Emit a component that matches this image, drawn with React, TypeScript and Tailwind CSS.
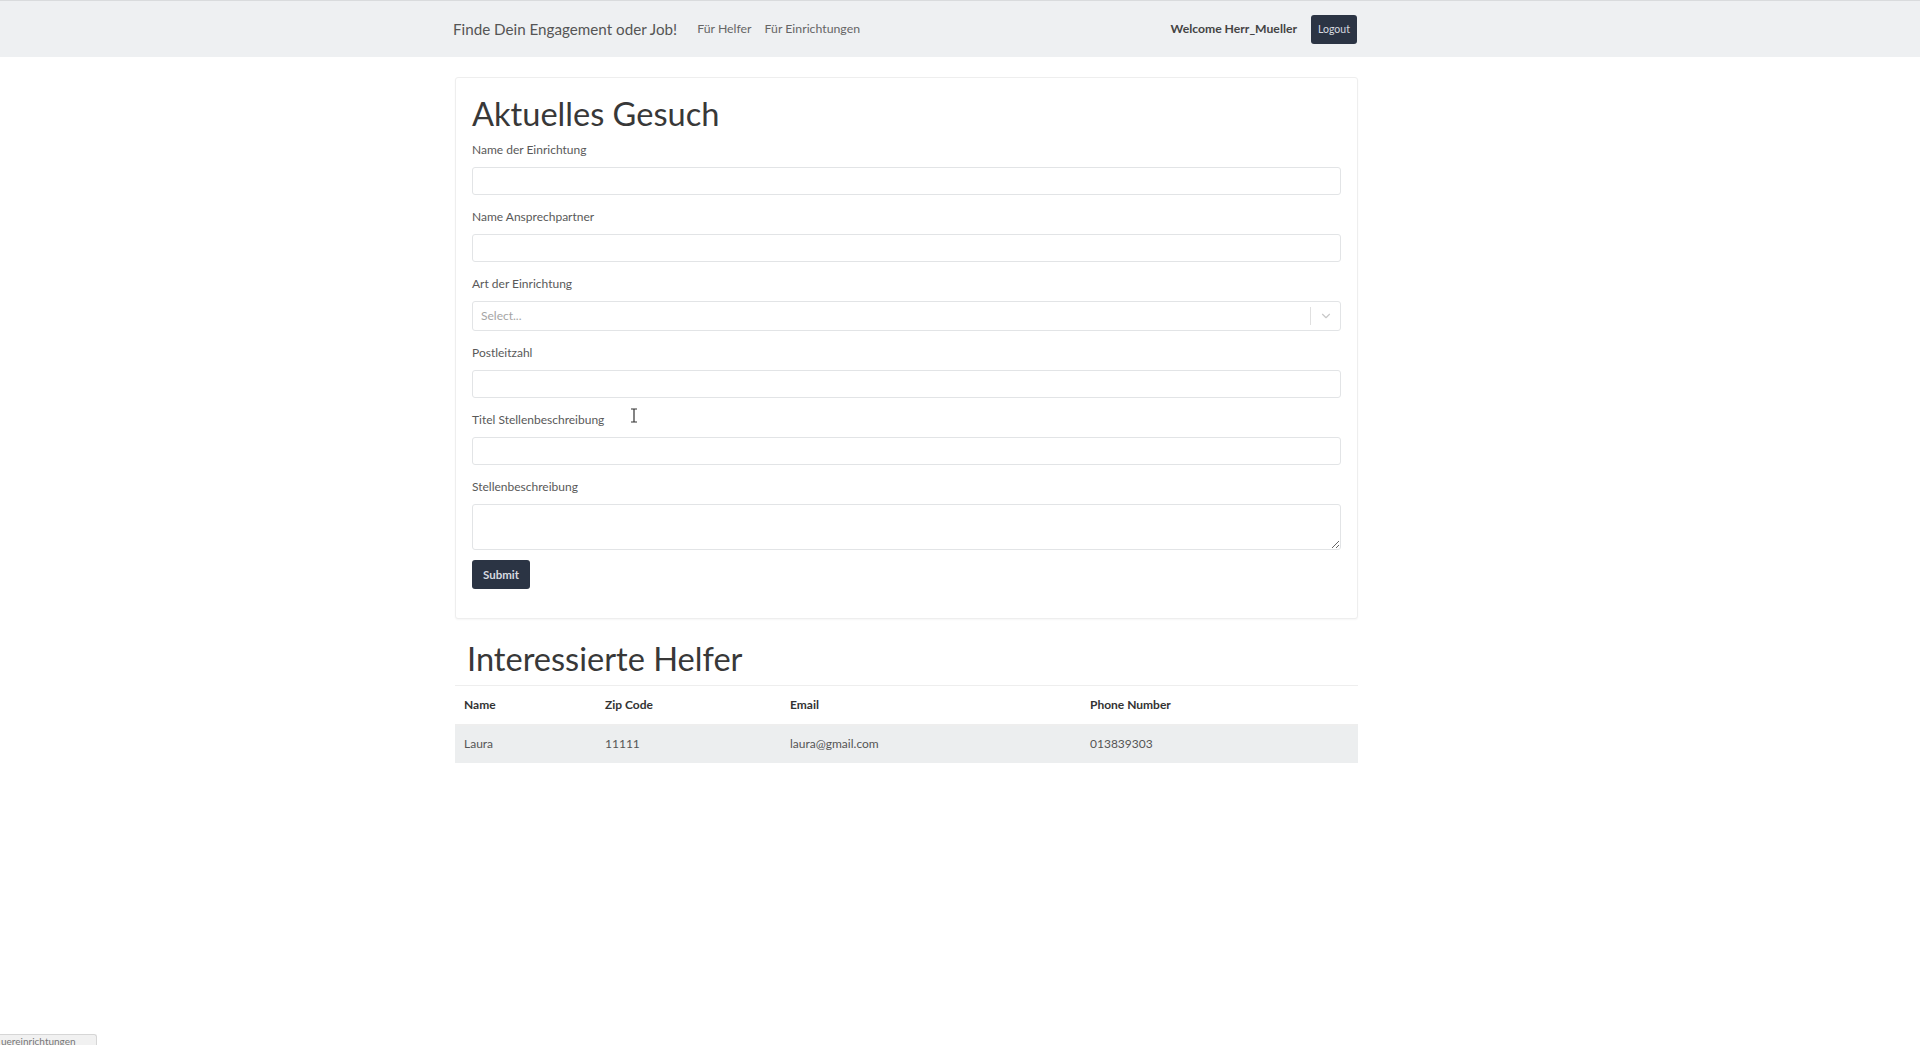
import { ChevronDown } from 'lucide-react';

const fields = [
  { label: 'Name der Einrichtung', kind: 'input' },
  { label: 'Name Ansprechpartner', kind: 'input' },
  { label: 'Art der Einrichtung', kind: 'select' },
  { label: 'Postleitzahl', kind: 'input' },
  { label: 'Titel Stellenbeschreibung', kind: 'input' },
  { label: 'Stellenbeschreibung', kind: 'textarea' },
];

const helpers = [{ name: 'Laura', zip: '11111', email: 'laura@gmail.com', phone: '013839303' }];

function Field({ label, kind }: { label: string; kind: string }) {
  return (
    <div className={kind === 'textarea' ? 'mb-[10px]' : 'mb-[13px]'}>
      <label className="block text-[12px] leading-[18px] text-[#595959] mb-2">{label}</label>
      {kind === 'input' && (
        <input className="block w-full h-[28px] rounded-[3px] border border-[#e2e4e6] bg-white px-2 text-[12px] outline-none" />
      )}
      {kind === 'select' && (
        <div className="flex h-[30px] w-full items-center rounded-[3px] border border-[#e2e4e6] bg-white">
          <span className="flex-1 pl-2 text-[12px] text-[#a5a5a5]">Select...</span>
          <span className="h-[18px] w-px bg-[#e0e0e0]" />
          <span className="flex w-[29px] justify-center text-[#c8c8c8]">
            <ChevronDown size={14} strokeWidth={2} />
          </span>
        </div>
      )}
      {kind === 'textarea' && (
        <textarea
          rows={2}
          className="block w-full h-[46px] rounded-[3px] border border-[#e2e4e6] bg-white px-2 text-[12px] outline-none"
        />
      )}
    </div>
  );
}

export default function App() {
  return (
    <div className="relative min-h-[1045px] bg-white font-['Lato',sans-serif] text-[#333]">
      <nav className="h-[57px] border-t border-[#d9dbdd] bg-[#eef0f2]">
        <div className="ml-[453px] flex h-full w-[904px] items-center pt-[1px]">
          <span className="text-[15.2px] text-[#555]">Finde Dein Engagement oder Job!</span>
          <a className="ml-[20px] text-[12.3px] text-[#666]">Für Helfer</a>
          <a className="ml-[13px] text-[12.3px] text-[#666]">Für Einrichtungen</a>
          <span className="ml-auto text-[12.2px] font-bold text-[#444]">Welcome Herr_Mueller</span>
          <button className="ml-[14px] h-[29px] w-[46px] rounded-[3px] bg-[#2b3444] text-[10.5px] text-[#d8dbe0]">
            Logout
          </button>
        </div>
      </nav>

      <main className="ml-[455px] w-[903px] pt-[20px]">
        <section className="rounded-[3px] border border-[#eeeeee] bg-white px-[16px] pt-[16px] pb-[29px] shadow-[0_1px_2px_rgba(0,0,0,0.04)]">
          <h1 className="text-[32.6px] leading-[1.2] text-[#383838] mb-[8px]">Aktuelles Gesuch</h1>
          {fields.map((f) => (
            <Field key={f.label} label={f.label} kind={f.kind} />
          ))}
          <button className="h-[29px] w-[58px] rounded-[3px] bg-[#2b3444] text-[11.5px] font-bold text-[#d8dbe0]">
            Submit
          </button>
        </section>

        <h1 className="mt-[20px] mb-[7px] pl-[12px] text-[32.6px] leading-[1.2] text-[#383838]">Interessierte Helfer</h1>
        <table className="w-full table-fixed border-collapse text-left text-[12px]">
          <thead>
            <tr className="h-[39px] border-t border-b-2 border-t-[#eeeeee] border-b-[#eeeeee]">
              <th className="w-[141px] pl-[9px] font-bold text-[#333]">Name</th>
              <th className="w-[185px] pl-[9px] font-bold text-[#333]">Zip Code</th>
              <th className="w-[300px] pl-[9px] font-bold text-[#333]">Email</th>
              <th className="pl-[9px] font-bold text-[#333]">Phone Number</th>
            </tr>
          </thead>
          <tbody>
            {helpers.map((h) => (
              <tr key={h.email} className="h-[38px] bg-[#eceeef] text-[#555]">
                <td className="pl-[9px]">{h.name}</td>
                <td className="pl-[9px]">{h.zip}</td>
                <td className="pl-[9px]">{h.email}</td>
                <td className="pl-[9px]">{h.phone}</td>
              </tr>
            ))}
          </tbody>
        </table>
      </main>

      <svg className="absolute left-[630px] top-[408px]" width="8" height="15" viewBox="0 0 8 15">
        <path d="M1 1h6M4 1v13M1 14h6" stroke="#333" strokeWidth="1.2" fill="none" />
      </svg>

      <div className="absolute bottom-0 left-0 h-[11px] w-[97px] overflow-hidden rounded-tr-[3px] border-t border-r border-[#d6d6d6] bg-[#f1f1f1] pl-[1px] text-[10px] leading-[12px] text-[#777]">
        uereinrichtungen
      </div>
    </div>
  );
}
